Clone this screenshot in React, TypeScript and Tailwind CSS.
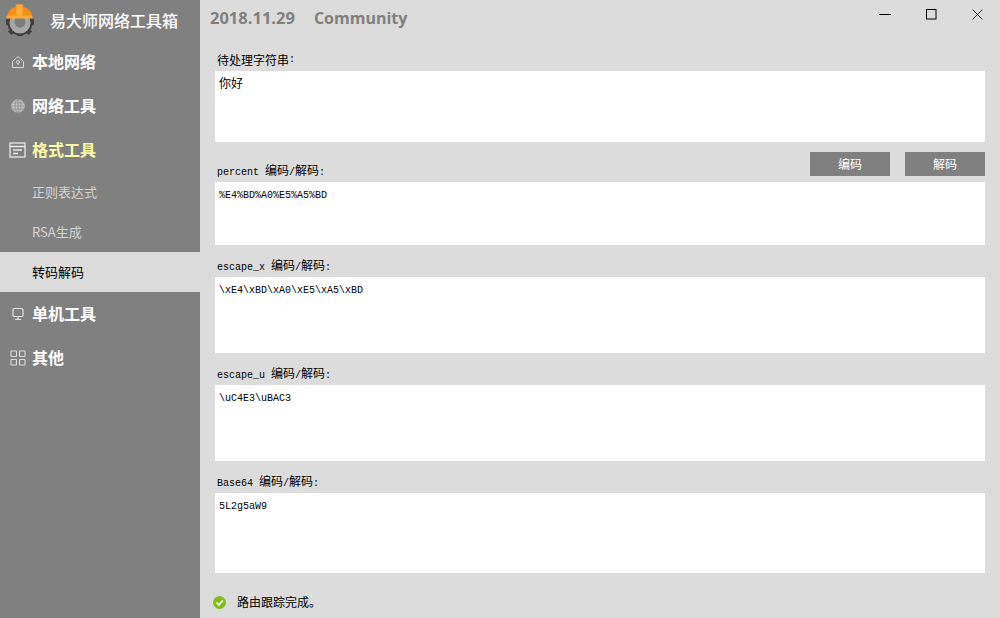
import type { ReactNode } from 'react';

const cjk = "font-['Noto_Sans_CJK_SC','Noto_Sans',sans-serif]";
const mono = "font-['Liberation_Mono','Noto_Sans_CJK_SC',monospace]";

function Logo() {
  return (
    <svg width="30" height="34" viewBox="0 0 30 34" className="shrink-0">
      <circle cx="15" cy="20" r="12.500" fill="#3f3f3f" />
      <g fill="#3f3f3f">
        <rect x="1" y="16" width="28" height="6" />
        <rect x="4" y="26" width="5" height="5" transform="rotate(45 6.500 28.500)" />
        <rect x="21" y="26" width="5" height="5" transform="rotate(45 23.500 28.500)" />
        <rect x="12.500" y="29" width="5" height="4" />
      </g>
      <circle cx="15" cy="20" r="10.500" fill="#a6a6a6" />
      <circle cx="15" cy="19" r="5.500" fill="#7c7c7c" />
      <path d="M2.500 15V13C2.500 8.500 6 5 10.500 4V1.500H18.500V4C23 5 27 8.500 27 13V15Z" fill="#f58f1c" />
      <rect x="1.500" y="12.500" width="26" height="3" rx="1" fill="#fda93a" />
      <rect x="11.500" y="1.500" width="6" height="11" fill="#fcae3c" />
    </svg>
  );
}

function HomeIcon() {
  return (
    <svg width="14" height="14" viewBox="0 0 14 14" fill="none" stroke="#d8d8d8" strokeWidth="1">
      <path d="M7 1.500 12.500 6.500V12.500H1.500V6.500Z" />
      <circle cx="7" cy="7" r="1.500" />
      <path d="M7 8.500V10" />
    </svg>
  );
}

function GlobeIcon() {
  return (
    <svg width="14" height="14" viewBox="0 0 14 14" fill="none" stroke="#8a8a8a" strokeWidth="0.700">
      <circle cx="7" cy="7" r="6.500" fill="#c2c2c2" stroke="#b0b0b0" />
      <ellipse cx="7" cy="7" rx="3" ry="6.200" />
      <path d="M7 1V13M1 7H13M1.800 4H12.200M1.800 10H12.200" />
    </svg>
  );
}

function FormatIcon() {
  return (
    <svg width="18" height="16" viewBox="0 0 18 16" fill="none" stroke="#e8e8e8" strokeWidth="1.300">
      <rect x="1" y="1" width="15" height="14" />
      <path d="M1 4.500H16M4 8H13M4 11.500H9" />
    </svg>
  );
}

function MonitorIcon() {
  return (
    <svg width="14" height="14" viewBox="0 0 14 14" fill="none" stroke="#e4e4e4" strokeWidth="1.200">
      <rect x="2" y="1.500" width="10" height="8" rx="1.500" />
      <path d="M4 12.500H10M7 9.500V12.500" />
    </svg>
  );
}

function GridIcon() {
  return (
    <svg width="16" height="16" viewBox="0 0 16 16" fill="none" stroke="#dcdcdc" strokeWidth="1.100">
      <rect x="1" y="1" width="5.500" height="5.500" rx="0.500" />
      <rect x="9.500" y="1" width="5.500" height="5.500" rx="0.500" />
      <rect x="1" y="9.500" width="5.500" height="5.500" rx="0.500" />
      <rect x="9.500" y="9.500" width="5.500" height="5.500" rx="0.500" />
    </svg>
  );
}

function NavItem({ icon, label, active }: { icon: ReactNode; label: string; active?: boolean }) {
  return (
    <div className="flex h-11 items-center">
      <div className="flex w-8 shrink-0 items-center justify-center pl-[4px]">{icon}</div>
      <span className={`pb-[2px] text-base font-bold ${active ? 'text-[#fbfba8]' : 'text-white'}`}>{label}</span>
    </div>
  );
}

function SubItem({ label, active }: { label: string; active?: boolean }) {
  return (
    <div className={`flex h-10 items-center pl-8 text-[13px] ${active ? 'bg-[#dcdcdc] text-black' : 'text-[#d4d4d4]'}`}>
      {label}
    </div>
  );
}

function FieldLabel({ name }: { name: string }) {
  return (
    <span className="pl-[2px] text-xs leading-4 text-black">
      <span className={`${mono} text-[10px]`}>{name} </span>
      编码<span className={`${mono} text-[10px]`}>/</span>解码<span className={`${mono} text-[10px]`}>:</span>
    </span>
  );
}

function Box({ height, children }: { height: string; children: ReactNode }) {
  return <div className={`${height} bg-white px-1 text-black`}>{children}</div>;
}

function Value({ text }: { text: string }) {
  return <div className={`${mono} pt-2 text-[10px] leading-3`}>{text}</div>;
}

function ActionButton({ label }: { label: string }) {
  return <div className="flex h-6 w-20 items-center justify-center bg-[#808080] pb-px text-xs text-white">{label}</div>;
}

export default function App() {
  return (
    <div className={`${cjk} flex h-[618px] w-[1000px] overflow-hidden bg-[#dcdcdc]`}>
      <aside className="w-[200px] shrink-0 bg-[#808080]">
        <div className="flex h-10 items-center pl-[5px]">
          <Logo />
          <span className="ml-[15px] text-base font-medium text-white">易大师网络工具箱</span>
        </div>
        <NavItem icon={<HomeIcon />} label="本地网络" />
        <NavItem icon={<GlobeIcon />} label="网络工具" />
        <NavItem icon={<FormatIcon />} label="格式工具" active />
        <SubItem label="正则表达式" />
        <SubItem label="RSA生成" />
        <SubItem label="转码解码" active />
        <NavItem icon={<MonitorIcon />} label="单机工具" />
        <NavItem icon={<GridIcon />} label="其他" />
      </aside>

      <main className="flex w-[800px] flex-col">
        <header className="flex h-[50px] items-start justify-between">
          <div className="flex h-9 items-center gap-[19px] pl-[10px] font-['Open_Sans',sans-serif] font-bold text-[#808080]">
            <span className="text-[16.500px]">2018.11.29</span>
            <span className="text-base">Community</span>
          </div>
          <div className="flex h-7 items-center gap-[35px] pr-[17px]">
            <svg width="12" height="12" viewBox="0 0 12 12"><path d="M0 6.500H12" stroke="#000" /></svg>
            <svg width="11" height="11" viewBox="0 0 11 11" fill="none"><rect x="0.500" y="0.500" width="9.500" height="9.500" stroke="#000" /></svg>
            <svg width="11" height="11" viewBox="0 0 11 11" fill="none"><path d="M0.500 0.500 10.500 10.500M10.500 0.500 0.500 10.500" stroke="#000" strokeWidth="0.800" /></svg>
          </div>
        </header>

        <div className="flex flex-col px-[15px]">
          <div className="flex h-[21px] items-start pl-[2px] text-xs leading-[20px] text-black">
            待处理字符串<span className={`${mono} text-[10px]`}>:</span>
          </div>
          <Box height="h-[71px]">
            <div className="pt-[5px] text-xs leading-[14px]">你好</div>
          </Box>

          <div className="flex h-10 items-end justify-between">
            <div className="pb-px"><FieldLabel name="percent" /></div>
            <div className="flex gap-[15px] pb-[6px]">
              <ActionButton label="编码" />
              <ActionButton label="解码" />
            </div>
          </div>
          <Box height="h-[63px]"><Value text="%E4%BD%A0%E5%A5%BD" /></Box>

          <div className="flex h-8 items-end pb-px"><FieldLabel name="escape_x" /></div>
          <Box height="h-[76px]"><Value text="\xE4\xBD\xA0\xE5\xA5\xBD" /></Box>

          <div className="flex h-8 items-end pb-px"><FieldLabel name="escape_u" /></div>
          <Box height="h-[76px]"><Value text="\uC4E3\uBAC3" /></Box>

          <div className="flex h-8 items-end pb-px"><FieldLabel name="Base64" /></div>
          <Box height="h-20"><Value text="5L2g5aW9" /></Box>

          <div className="flex h-[45px] items-center gap-[11px] pt-[13px] text-xs text-black">
            <svg width="13" height="13" viewBox="0 0 13 13" className="-ml-[2px]">
              <circle cx="6.500" cy="6.500" r="6.500" fill="#84bd1c" />
              <path d="M3.500 6.500 5.800 9 9.800 4.500" fill="none" stroke="#fff" strokeWidth="1.600" />
            </svg>
            <span>路由跟踪完成。</span>
          </div>
        </div>
      </main>
    </div>
  );
}
